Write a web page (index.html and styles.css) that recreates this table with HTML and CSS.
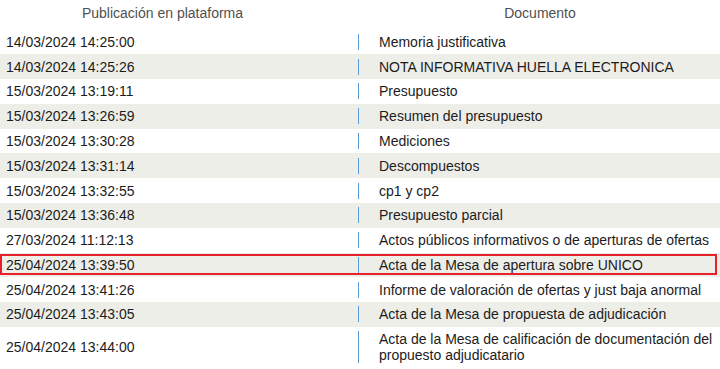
FILE: index.html
```html
<!DOCTYPE html>
<html lang="es">
<head>
<meta charset="utf-8">
<title>Documentos</title>
<link rel="stylesheet" href="styles.css">
</head>
<body>
<div class="docs">
  <div class="row head">
    <div class="c-date">Publicación en plataforma</div>
    <div class="c-doc">Documento</div>
  </div>
  <div class="row"><div class="c-date">14/03/2024 14:25:00</div><div class="c-doc"><span class="txt">Memoria justificativa</span></div></div>
  <div class="row alt"><div class="c-date">14/03/2024 14:25:26</div><div class="c-doc"><span class="txt">NOTA INFORMATIVA HUELLA ELECTRONICA</span></div></div>
  <div class="row"><div class="c-date">15/03/2024 13:19:11</div><div class="c-doc"><span class="txt">Presupuesto</span></div></div>
  <div class="row alt"><div class="c-date">15/03/2024 13:26:59</div><div class="c-doc"><span class="txt">Resumen del presupuesto</span></div></div>
  <div class="row"><div class="c-date">15/03/2024 13:30:28</div><div class="c-doc"><span class="txt">Mediciones</span></div></div>
  <div class="row alt"><div class="c-date">15/03/2024 13:31:14</div><div class="c-doc"><span class="txt">Descompuestos</span></div></div>
  <div class="row"><div class="c-date">15/03/2024 13:32:55</div><div class="c-doc"><span class="txt">cp1 y cp2</span></div></div>
  <div class="row alt"><div class="c-date">15/03/2024 13:36:48</div><div class="c-doc"><span class="txt">Presupuesto parcial</span></div></div>
  <div class="row"><div class="c-date">27/03/2024 11:12:13</div><div class="c-doc"><span class="txt">Actos públicos informativos o de aperturas de ofertas</span></div></div>
  <div class="row alt marked"><div class="c-date">25/04/2024 13:39:50</div><div class="c-doc"><span class="txt">Acta de la Mesa de apertura sobre UNICO</span></div></div>
  <div class="row"><div class="c-date">25/04/2024 13:41:26</div><div class="c-doc"><span class="txt">Informe de valoración de ofertas y just baja anormal</span></div></div>
  <div class="row alt"><div class="c-date">25/04/2024 13:43:05</div><div class="c-doc"><span class="txt">Acta de la Mesa de propuesta de adjudicación</span></div></div>
  <div class="row"><div class="c-date">25/04/2024 13:44:00</div><div class="c-doc"><span class="txt">Acta de la Mesa de calificación de documentación del propuesto adjudicatario</span></div></div>
</div>
</body>
</html>
```
FILE: styles.css
```css
html, body {
  margin: 0;
  padding: 0;
  background: #ffffff;
}
body {
  font-family: "Liberation Sans", Arial, sans-serif;
  font-size: 14px;
  color: #1c1c1c;
  width: 720px;
  overflow: hidden;
}
.docs {
  display: flex;
  flex-direction: column;
}
.row {
  display: grid;
  grid-template-columns: 358px 1fr;
  align-items: center;
  padding: 4.4px 0;
  line-height: 16px;
}
.row.alt {
  background: #eeeee9;
}
.row.head {
  padding: 5px 0 8.5px;
  color: #505050;
}
.head .c-date {
  width: 325px;
  padding-left: 0;
  text-align: center;
}
.head .c-doc {
  text-align: center;
  padding-left: 2px;
}
.c-date {
  padding-left: 6px;
}
.row:not(.head) .c-doc {
  border-left: 1.5px solid #5b9bd5;
  padding-left: 20px;
}
.txt {
  display: block;
}
.marked {
  position: relative;
}
.marked::after {
  content: "";
  position: absolute;
  top: 1.2px;
  bottom: 2.2px;
  left: 0;
  right: 3.5px;
  border: 2.4px solid #e8202a;
}
```
